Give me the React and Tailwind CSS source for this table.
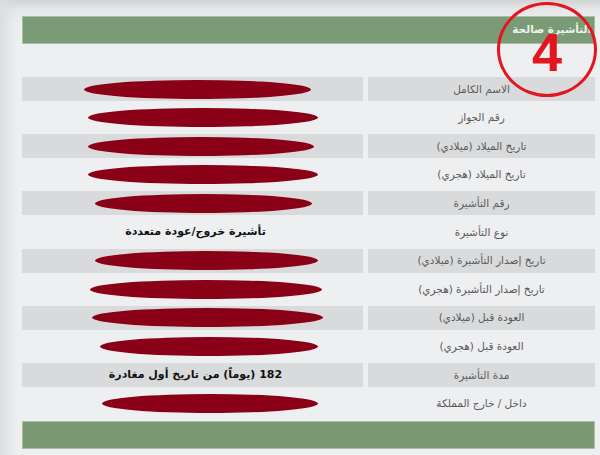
import React from "react";

const rows = [
  { label: "الاسم الكامل", red: [62, 227] },
  { label: "رقم الجواز", red: [66, 230] },
  { label: "تاريخ الميلاد (ميلادي)", red: [66, 226] },
  { label: "تاريخ الميلاد (هجري)", red: [66, 230] },
  { label: "رقم التأشيرة", red: [73, 217] },
  { label: "نوع التأشيرة", text: "تأشيرة خروج/عودة متعددة" },
  { label: "تاريخ إصدار التأشيرة (ميلادي)", red: [73, 223] },
  { label: "تاريخ إصدار التأشيرة (هجري)", red: [68, 232] },
  { label: "العودة قبل (ميلادي)", red: [70, 231] },
  { label: "العودة قبل (هجري)", red: [78, 218] },
  { label: "مدة التأشيرة", text: "182 (يوماً) من تاريخ أول مغادرة" },
  { label: "داخل / خارج المملكة", red: [80, 216] },
];

export default function App() {
  return (
    <div
      className="relative w-[600px] h-[455px] overflow-hidden bg-[linear-gradient(180deg,#d2d3d5_0px,#e6e7e9_10px,#eeeff1_24px,#eeeff1_100%)]"
      style={{ fontFamily: '"DejaVu Sans", Tahoma, sans-serif' }}
    >
      <div className="absolute inset-y-0 left-0 w-[18px] bg-[linear-gradient(90deg,#dcdde0,#eeeff100)] pointer-events-none" />
      <div className="relative pl-[22px] pt-[16px] w-[595px]">
        <div className="h-[28px] bg-[#7b9b76] flex items-center justify-end pr-[3px] border border-[#a9bfa5]">
          <span dir="rtl" className="text-[10.5px] font-semibold text-[#eef3ec] tracking-tight">التأشيرة صالحة</span>
        </div>

        <div className="mt-[33px] grid grid-cols-[341px_227px] gap-x-[5px] gap-y-[4.6px]">
          {rows.map((r, i) => {
            const grey = i % 2 === 0;
            const bg = grey ? "bg-[#d9dadc]" : "";
            return (
              <React.Fragment key={i}>
                <div className={`h-[24px] flex items-center ${bg}`}>
                  {r.red ? (
                    <div
                      className="h-[19px] rounded-[50%] bg-[#8a0016]"
                      style={{ marginLeft: r.red[0], width: r.red[1] }}
                    />
                  ) : (
                    <div dir="rtl" className="w-full text-center text-[11px] font-bold text-[#111] pl-[6px] pt-[1px]">
                      {r.text}
                    </div>
                  )}
                </div>
                <div dir="rtl" className={`h-[24px] flex items-center justify-center pt-[1px] text-[10.5px] text-[#5a5a5a] ${bg}`}>
                  {r.label}
                </div>
              </React.Fragment>
            );
          })}
        </div>

        <div className="mt-[5px] h-[28px] bg-[#7b9a74] border border-[#a9bfa5]" />
      </div>

      <div className="absolute left-[497px] top-[2px] w-[100px] h-[95px] rounded-[50%] border-[3px] border-[#e3161f] flex items-center justify-center">
        <span
          className="text-[54px] font-bold text-[#e3161f] leading-none mt-[4px]"
          style={{ fontFamily: '"Liberation Sans", Arial, sans-serif' }}
        >
          4
        </span>
      </div>
    </div>
  );
}
